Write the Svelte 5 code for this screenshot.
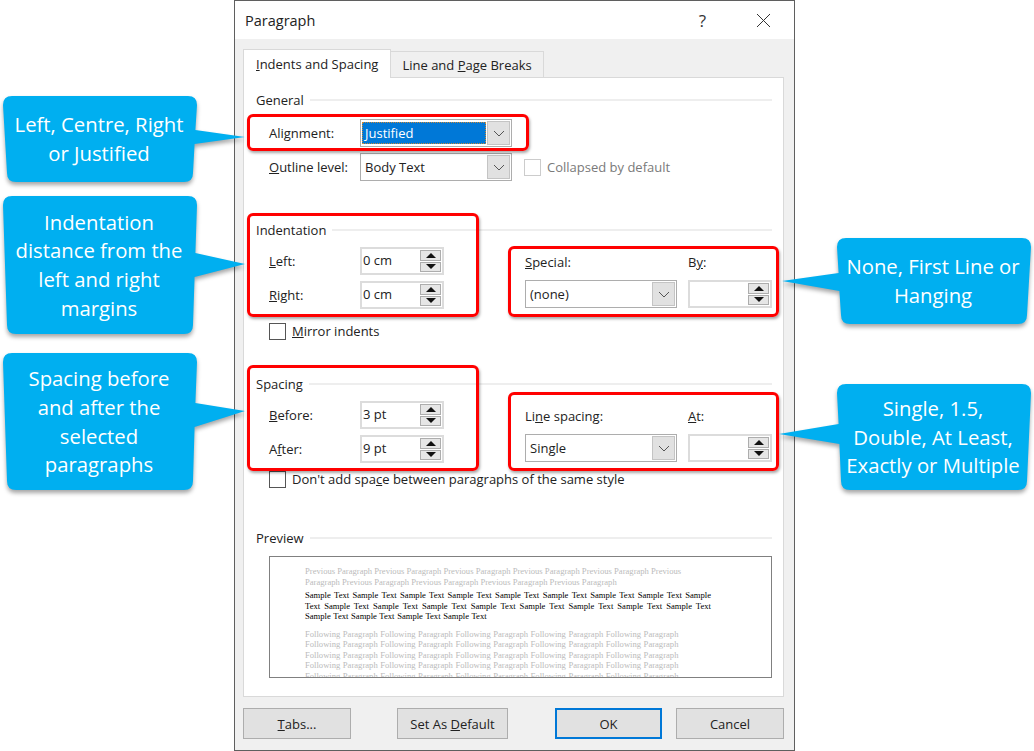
<script>
    // callouts sit over the dialog, so they are placed on the page by coordinates
    const callouts = [
        { x0: 3, x1: 197, y0: 96, y1: 182, tail: [130, 144], tip: [245, 137], side: 'right', lines: ['Left, Centre, Right', 'or Justified'] },
        { x0: 3, x1: 197, y0: 196, y1: 334, tail: [253, 277], tip: [245, 264], side: 'right', lines: ['Indentation', 'distance from the', 'left and right', 'margins'] },
        { x0: 3, x1: 197, y0: 353, y1: 490, tail: [403, 427], tip: [245, 411], side: 'right', lines: ['Spacing before', 'and after the', 'selected', 'paragraphs'] },
        { x0: 837, x1: 1031, y0: 238, y1: 324, tail: [273, 291], tip: [782, 281], side: 'left', lines: ['None, First Line or', 'Hanging'] },
        { x0: 837, x1: 1031, y0: 384, y1: 490, tail: [424, 444], tip: [779, 434], side: 'left', lines: ['Single, 1.5,', 'Double, At Least,', 'Exactly or Multiple'] }
    ];

    const redBoxes = [
        { x: 247, y: 114, w: 282, h: 37 },
        { x: 247, y: 213, w: 232, h: 104 },
        { x: 508, y: 246, w: 271, h: 71 },
        { x: 247, y: 365, w: 232, h: 106 },
        { x: 508, y: 392, w: 271, h: 79 }
    ];

    const prevText = 'Previous Paragraph Previous Paragraph Previous Paragraph Previous Paragraph Previous Paragraph Previous Paragraph Previous Paragraph Previous Paragraph Previous Paragraph Previous Paragraph';
    const sampleText = 'Sample Text '.repeat(21).trim();
    const followText = 'Following Paragraph '.repeat(30).trim();

    function calloutPath(c) {
        const r = 9;
        const inset = 4; // the shapes narrow a little towards the bottom
        const { x0, x1, y0, y1 } = c;
        const leftTail = c.side === 'left' ? `L${x0 + inset * 0.6} ${c.tail[1]} L${c.tip[0]} ${c.tip[1]} L${x0 + inset * 0.4} ${c.tail[0]}` : '';
        const rightTail = c.side === 'right' ? `L${x1 - inset * 0.4} ${c.tail[0]} L${c.tip[0]} ${c.tip[1]} L${x1 - inset * 0.6} ${c.tail[1]}` : '';
        return `M${x0 + r} ${y0} L${x1 - r} ${y0} Q${x1} ${y0} ${x1} ${y0 + r} ${rightTail}
            L${x1 - inset} ${y1 - r} Q${x1 - inset} ${y1} ${x1 - inset - r} ${y1}
            L${x0 + inset + r} ${y1} Q${x0 + inset} ${y1} ${x0 + inset} ${y1 - r} ${leftTail}
            L${x0} ${y0 + r} Q${x0} ${y0} ${x0 + r} ${y0} Z`;
    }
</script>

{#snippet spinner(value)}
    <div class="spin">
        <span class="spin-value">{value}</span>
        <div class="spin-btns">
            <div class="spin-btn"><i class="tri up"></i></div>
            <div class="spin-btn"><i class="tri down"></i></div>
        </div>
    </div>
{/snippet}

{#snippet chevron()}
    <div class="drop">
        <svg width="12" height="7" viewBox="0 0 12 7" fill="none" stroke="#555" stroke-width="1">
            <path d="M1 1l5 5 5-5" />
        </svg>
    </div>
{/snippet}

<div class="page">
    <div class="dialog">
        <div class="titlebar">
            <span class="title">Paragraph</span>
            <span class="help">?</span>
            <svg class="close" width="15" height="15" viewBox="0 0 15 15" stroke="#333" stroke-width="1">
                <path d="M1 1l13 13M14 1L1 14" />
            </svg>
        </div>

        <div class="body">
            <div class="tabs">
                <div class="tab active"><u>I</u>ndents and Spacing</div>
                <div class="tab">Line and <u>P</u>age Breaks</div>
            </div>

            <div class="panel">
                <section class="general">
                    <div class="heading"><span>General</span><hr /></div>
                    <div class="row first">
                        <label for="align">Alignment:</label>
                        <div class="select" id="align">
                            <span class="value selected"><span>Justified</span></span>
                            {@render chevron()}
                        </div>
                    </div>
                    <div class="row">
                        <label for="outline"><u>O</u>utline level:</label>
                        <div class="select" id="outline">
                            <span class="value">Body Text</span>
                            {@render chevron()}
                        </div>
                        <div class="check disabled"><i class="box"></i>Collapsed by default</div>
                    </div>
                </section>

                <section class="indent">
                    <div class="heading"><span>Indentation</span><hr /></div>
                    <div class="columns">
                        <div class="col-left">
                            <div class="row spin-row"><span class="lbl"><u>L</u>eft:</span>{@render spinner('0 cm')}</div>
                            <div class="row spin-row"><span class="lbl"><u>R</u>ight:</span>{@render spinner('0 cm')}</div>
                        </div>
                        <div class="col-right">
                            <div class="labels"><span class="l1"><u>S</u>pecial:</span><span>B<u>y</u>:</span></div>
                            <div class="controls">
                                <div class="select wide"><span class="value">(none)</span>{@render chevron()}</div>
                                {@render spinner('')}
                            </div>
                        </div>
                    </div>
                    <div class="check mirror"><i class="box"></i><span><u>M</u>irror indents</span></div>
                </section>

                <section class="spacing">
                    <div class="heading"><span>Spacing</span><hr /></div>
                    <div class="columns">
                        <div class="col-left">
                            <div class="row spin-row"><span class="lbl"><u>B</u>efore:</span>{@render spinner('3 pt')}</div>
                            <div class="row spin-row"><span class="lbl">A<u>f</u>ter:</span>{@render spinner('9 pt')}</div>
                        </div>
                        <div class="col-right">
                            <div class="labels"><span class="l1">Li<u>n</u>e spacing:</span><span><u>A</u>t:</span></div>
                            <div class="controls">
                                <div class="select wide"><span class="value">Single</span>{@render chevron()}</div>
                                {@render spinner('')}
                            </div>
                        </div>
                    </div>
                    <div class="check dont"><i class="box"></i><span>Don't add spa<u>c</u>e between paragraphs of the same style</span></div>
                </section>

                <section class="preview-sec">
                    <div class="heading"><span>Preview</span><hr /></div>
                    <div class="preview">
                        <p class="grey">{prevText}</p>
                        <p class="sample">{sampleText}</p>
                        <p class="grey follow">{followText}</p>
                    </div>
                </section>
            </div>

            <div class="buttons">
                <button class="btn tabs-btn"><u>T</u>abs...</button>
                <button class="btn default-btn">Set As <u>D</u>efault</button>
                <button class="btn ok">OK</button>
                <button class="btn cancel">Cancel</button>
            </div>
        </div>
    </div>

    {#each redBoxes as b}
        <div class="red" style="left:{b.x}px;top:{b.y}px;width:{b.w}px;height:{b.h}px"></div>
    {/each}

    <svg class="shapes" width="1034" height="751">
        {#each callouts as c}
            <path d={calloutPath(c)} fill="#00aff0" />
        {/each}
    </svg>

    {#each callouts as c}
        <div class="callout-text" style="left:{c.x0}px;top:{c.y0}px;width:{c.x1 - c.x0 - 2}px;height:{c.y1 - c.y0}px">
            {#each c.lines as line}
                <div>{line}</div>
            {/each}
        </div>
    {/each}
</div>

<style>
    :global(body) {
        margin: 0;
        background: #fff;
    }

    .page {
        position: relative;
        width: 1034px;
        height: 751px;
        overflow: hidden;
        background: #fff;
        font-family: "Open Sans", "Noto Sans", sans-serif;
        font-size: 13px;
        color: #222;
    }

    .dialog {
        margin-left: 234px;
        width: 561px;
        height: 751px;
        box-sizing: border-box;
        border: 1px solid #5f5f5f;
        display: flex;
        flex-direction: column;
    }

    .titlebar {
        height: 38px;
        flex: none;
        background: #fff;
        display: flex;
        align-items: center;
        padding-left: 10px;
        padding-right: 23px;
    }

    .title {
        font-size: 14.5px;
        flex: 1;
    }

    .help {
        font-size: 17px;
        margin-right: 50px;
        color: #333;
    }

    .body {
        flex: 1;
        background: #f0f0f0;
        padding: 10px 10px 0 8px;
        display: flex;
        flex-direction: column;
    }

    .tabs {
        display: flex;
        height: 29px;
        position: relative;
        z-index: 1;
        margin-bottom: -1px;
    }

    .tab {
        box-sizing: border-box;
        height: 27px;
        margin-top: 2px;
        padding: 4px 11px 0 11px;
        border: 1px solid #d9d9d9;
        border-left: none;
        background: #f0f0f0;
        font-size: 13px;
    }

    .tab.active {
        height: 29px;
        margin-top: 0;
        background: #fff;
        border-left: 1px solid #d9d9d9;
        border-bottom: none;
        padding: 5px 12px 0 12px;
    }

    .panel {
        box-sizing: border-box;
        height: 620px;
        background: #fff;
        border: 1px solid #d9d9d9;
        padding: 0 11px 0 12px;
    }

    section {
        box-sizing: border-box;
    }

    .general { height: 143px; padding-top: 13px; }
    .indent { height: 154px; }
    .spacing { height: 154px; }

    .heading {
        display: flex;
        align-items: center;
        height: 18px;
        gap: 6px;
    }

    .heading hr {
        flex: 1;
        border: none;
        border-top: 2px solid #eeeeee;
        margin: 0;
    }

    .row {
        display: flex;
        align-items: center;
        height: 34px;
    }

    .row.first { margin-top: 7px; }

    .row label,
    .lbl {
        width: 91px;
        margin-left: 13px;
        flex: none;
    }

    .select {
        box-sizing: border-box;
        width: 152px;
        height: 28px;
        border: 1px solid #adadad;
        background: #fff;
        display: flex;
        align-items: stretch;
        padding: 1px;
    }

    .value {
        flex: 1;
        padding-left: 3px;
        display: flex;
        align-items: center;
    }

    .value.selected {
        background: #0078d7;
        color: #fff;
        padding: 0;
        margin: 1px 1px 1px 0;
        outline: 1px dotted #c98a3a;
        outline-offset: -1px;
    }

    .value.selected span {
        padding-left: 3px;
    }

    .drop {
        width: 21px;
        flex: none;
        background: #e1e1e1;
        border: 1px solid #c4c4c4;
        display: flex;
        align-items: center;
        justify-content: center;
    }

    .check {
        display: flex;
        align-items: center;
        gap: 6px;
    }

    .box {
        box-sizing: border-box;
        display: block;
        width: 17px;
        height: 17px;
        border: 1px solid #555;
        background: #fff;
    }

    .check.disabled {
        margin-left: 12px;
        color: #7a7a7a;
    }

    .check.disabled .box {
        border-color: #ccc;
    }

    .columns {
        display: flex;
    }

    .col-left {
        width: 269px;
        flex: none;
        padding-top: 5px;
    }

    .spin-row {
        height: 34px;
    }

    .spin {
        box-sizing: border-box;
        width: 84px;
        height: 28px;
        border: 2px solid #dcdcdc;
        background: #fff;
        display: flex;
        align-items: stretch;
        justify-content: space-between;
    }

    .spin-value {
        padding-left: 1px;
        line-height: 23px;
    }

    .spin-btns {
        display: flex;
        flex-direction: column;
        width: 21px;
        margin: 1px;
        gap: 1px;
    }

    .spin-btn {
        flex: 1;
        background: #e6e6e6;
        border: 1px solid #adadad;
        display: flex;
        align-items: center;
        justify-content: center;
    }

    .tri {
        display: block;
        width: 0;
        height: 0;
        border-left: 5px solid transparent;
        border-right: 5px solid transparent;
    }

    .tri.up { border-bottom: 5px solid #111; }
    .tri.down { border-top: 5px solid #111; }

    .col-right {
        flex: 1;
        margin-top: 10px;
    }

    .labels {
        display: flex;
        height: 25px;
        align-items: center;
    }

    .l1 {
        width: 163px;
    }

    .controls {
        display: flex;
        gap: 11px;
        margin-top: 6px;
    }

    .mirror {
        margin: 10px 0 0 13px;
    }

    .dont {
        margin: 4px 0 0 13px;
    }

    .preview {
        box-sizing: border-box;
        height: 122px;
        margin: 9px 0 0 13px;
        width: 503px;
        border: 1px solid #808080;
        background: #fff;
        padding: 9px 60px 0 35px;
        overflow: hidden;
        font-family: "Liberation Serif", serif;
        font-size: 8.6px;
        line-height: 10.5px;
        color: #000;
    }

    .preview p {
        margin: 0 0 3px;
    }

    .preview .grey {
        color: #bbb;
    }

    .preview .follow {
        word-spacing: 0.36px;
    }

    .preview .sample {
        text-align: justify;
        word-spacing: 0.5px;
        margin-bottom: 7px;
    }

    .buttons {
        display: flex;
        margin-top: 11px;
    }

    .btn {
        box-sizing: border-box;
        height: 31px;
        background: #e1e1e1;
        border: 1px solid #adadad;
        font-family: inherit;
        font-size: 13px;
        color: #222;
        padding: 0;
    }

    .tabs-btn { width: 108px; }
    .default-btn { width: 111px; margin-left: 46px; }
    .ok { width: 107px; margin-left: 47px; border: 2px solid #0078d7; }
    .cancel { width: 108px; margin-left: 14px; }

    .red {
        position: absolute;
        box-sizing: border-box;
        border: 3px solid #f00;
        border-radius: 6px;
        box-shadow: 1px 2px 3px rgba(0, 0, 0, 0.35);
    }

    .shapes {
        position: absolute;
        left: 0;
        top: 0;
        filter: drop-shadow(0 3px 2px rgba(0, 0, 0, 0.35));
    }

    .callout-text {
        position: absolute;
        display: flex;
        flex-direction: column;
        align-items: center;
        justify-content: center;
        color: #fff;
        font-size: 20.3px;
        line-height: 28.7px;
        white-space: nowrap;
    }
</style>
